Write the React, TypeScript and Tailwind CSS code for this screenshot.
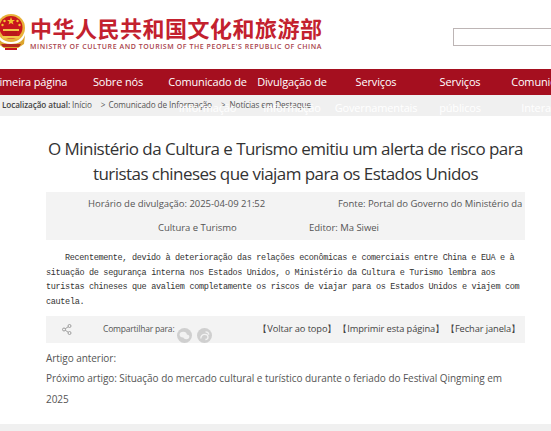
function Emblem() {
  return (
    <svg width="30" height="38" viewBox="0 0 30 38" className="shrink-0 -ml-[4px] self-start mt-[13px]">
      <circle cx="15" cy="15" r="14" fill="#e8b23a" />
      <circle cx="15" cy="14.5" r="11.5" fill="#c8161d" />
      <polygon points="15,4 16,7 19,7 16.6,8.8 17.5,11.6 15,10 12.5,11.6 13.4,8.8 11,7 14,7" fill="#f4c430" />
      <circle cx="8.5" cy="8" r="1.2" fill="#f4c430" />
      <circle cx="6.5" cy="12" r="1.2" fill="#f4c430" />
      <circle cx="21.5" cy="8" r="1.2" fill="#f4c430" />
      <circle cx="23.5" cy="12" r="1.2" fill="#f4c430" />
      <path d="M7 16h16v2H7z" fill="#f2c84b" />
      <path d="M9 18h12v5H9z" fill="#b9161b" />
      <path d="M6 23h18v2.5H6z" fill="#f2c84b" />
      <path d="M1 22c2 6 6 9 14 9s12-3 14-9l-1 9-6 4H8l-6-4z" fill="#dca52e" />
      <path d="M5 31h20l-2 3H7z" fill="#b52a1c" />
      <path d="M9 35h12v2H9z" fill="#c8161d" />
    </svg>
  );
}

function ShareIcon() {
  return (
    <svg width="10" height="11" viewBox="0 0 10 11" fill="none" stroke="#8a8a8a" strokeWidth="0.8">
      <circle cx="7.5" cy="2" r="1.5" />
      <circle cx="2" cy="5.5" r="1.5" />
      <circle cx="7.5" cy="9" r="1.5" />
      <path d="M3.3 4.7 6.2 2.8M3.3 6.3 6.2 8.2" />
    </svg>
  );
}

function ChatIcon() {
  return (
    <svg width="15" height="15" viewBox="0 0 15 15" className="rounded-full bg-[#cfcfcf]">
      <ellipse cx="6.2" cy="6.6" rx="3.6" ry="2.9" fill="#f2f2f2" />
      <ellipse cx="9.3" cy="8.8" rx="3" ry="2.4" fill="#f2f2f2" />
    </svg>
  );
}

function WeiboIcon() {
  return (
    <svg width="15" height="15" viewBox="0 0 15 15" className="rounded-full bg-[#cfcfcf]" fill="none" stroke="#f2f2f2" strokeWidth="1.3">
      <path d="M3.8 10.5c0-2.6 1.6-4.2 4-4.2 1.8 0 3.2 1.1 3.2 2.7 0 1.4-1.1 2.5-2.6 2.5" />
      <path d="M8.5 3.8c1.8 0 3.2 1.2 3.4 2.9" />
    </svg>
  );
}

const navItems = [
  { label: "Primeira página", width: "w-[96px]" },
  { label: "Sobre nós", width: "w-[84px]" },
  { label: "Comunicado de Informação", width: "w-[95px]" },
  { label: "Divulgação de Informação", width: "w-[74px]" },
  { label: "Serviços Governamentais", width: "w-[94px]" },
  { label: "Serviços públicos", width: "w-[74px]" },
  { label: "Comunicação Interativa", width: "w-[96px]" },
];

export default function App() {
  return (
    <div className="w-[551px] h-[431px] overflow-hidden bg-white font-['Open_Sans',sans-serif] text-[#333]">
      <header className="h-[69px] flex items-center">
        <Emblem />
        <div className="ml-[4px] w-[293px] shrink-0">
          <div className="font-['Noto_Sans_CJK_SC',sans-serif] font-bold text-[22px] leading-[20px] mb-[5px] tracking-[0.5px] text-[#c3212e] whitespace-nowrap">
            中华人民共和国文化和旅游部
          </div>
          <div className="text-[7px] leading-[10px] font-semibold tracking-[0.56px] text-[#a9434c] whitespace-nowrap">
            MINISTRY OF CULTURE AND TOURISM OF THE PEOPLE'S REPUBLIC OF CHINA
          </div>
        </div>
        <div className="ml-[130px] mt-[5px] w-[110px] h-[18px] shrink-0 border border-[#bdb5b5] bg-white" />
      </header>

      <nav className="relative z-10 h-[26px] bg-[#a50f1f] flex -ml-[20px] w-[640px]">
        {navItems.map((item) => (
          <div key={item.label} className={`${item.width} shrink-0 text-center text-[11px] leading-[26px] tracking-[-0.15px] text-white`}>
            {item.label}
          </div>
        ))}
      </nav>

      <div className="h-[21px] bg-[#f0f0f0] flex items-center pl-[2px] text-[8.2px] tracking-[-0.1px] text-[#555] whitespace-nowrap">
        <span className="font-semibold text-[#444]">Localização atual:</span>
        <span className="ml-[2px]">Início</span>
        <span className="ml-[9px]">&gt;</span>
        <span className="ml-[3px]">Comunicado de Informação</span>
        <span className="ml-[9px]">&gt;</span>
        <span className="ml-[4px]">Notícias em Destaque</span>
      </div>

      <main className="pl-[46px] pr-[26px] w-[551px]">
        <h1 className="mt-[20px] text-center text-[17px] leading-[25px] tracking-[-0.55px] font-normal text-[#333]">
          O Ministério da Cultura e Turismo emitiu um alerta de risco para turistas chineses que viajam para os Estados Unidos
        </h1>

        <div className="mt-[6px] h-[48px] bg-[#f3f3f3] text-[9.5px] leading-[24px] tracking-[-0.03px] text-[#555] whitespace-nowrap">
          <div className="flex pl-[42px]">
            <span className="w-[250px]">Horário de divulgação: 2025-04-09 21:52</span>
            <span>Fonte: Portal do Governo do Ministério da</span>
          </div>
          <div className="flex pl-[112px]">
            <span className="w-[151px]">Cultura e Turismo</span>
            <span>Editor: Ma Siwei</span>
          </div>
        </div>

        <p className="mt-[11px] font-['Liberation_Mono',monospace] text-[8.5px] leading-[14.7px] tracking-[-0.32px] text-[#333] indent-[19px]">
          Recentemente, devido à deterioração das relações econômicas e comerciais entre China e EUA e à situação de segurança interna nos Estados Unidos, o Ministério da Cultura e Turismo lembra aos turistas chineses que avaliem completamente os riscos de viajar para os Estados Unidos e viajem com cautela.
        </p>

        <div className="mt-[6px] h-[27px] bg-[#f3f3f3] flex items-center text-[9.3px] tracking-[-0.1px] text-[#555] whitespace-nowrap">
          <span className="ml-[16px]"><ShareIcon /></span>
          <span className="ml-[31px] text-[8.5px] tracking-[-0.2px]">Compartilhar para:</span>
          <span className="ml-[3px] mt-[12px] flex gap-[5px]">
            <ChatIcon />
            <WeiboIcon />
          </span>
          <span className="ml-auto mr-[5px] flex gap-[2px] text-[#444]">
            <span>【Voltar ao topo】</span>
            <span>【Imprimir esta página】</span>
            <span>【Fechar janela】</span>
          </span>
        </div>

        <div className="mt-[5px] text-[10px] leading-[20.5px] tracking-[-0.05px] text-[#555]">
          <div>Artigo anterior:</div>
          <div>
            Próximo artigo: <span>Situação do mercado cultural e turístico durante o feriado do Festival Qingming em 2025</span>
          </div>
        </div>
      </main>

      <div className="mt-[15px] h-[10px] bg-[#f0f0f0]" />
    </div>
  );
}
